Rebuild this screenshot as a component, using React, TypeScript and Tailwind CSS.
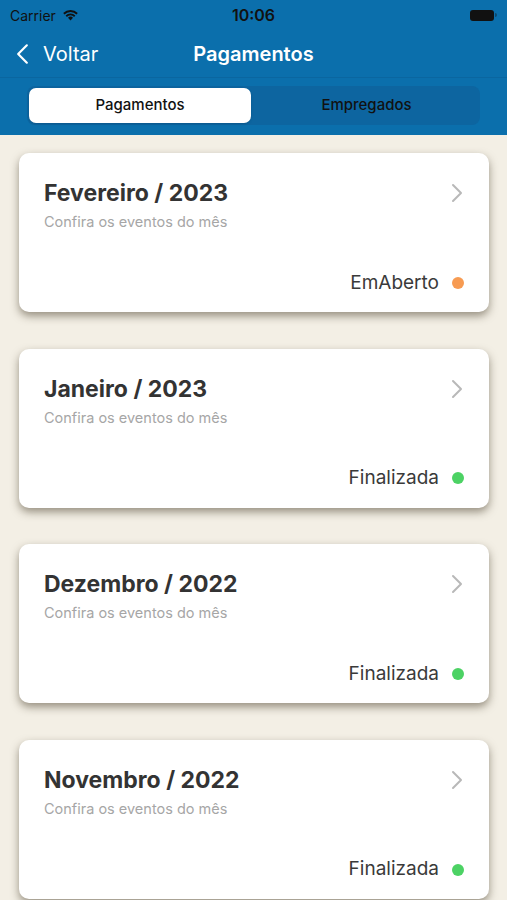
import React from "react";

const items = [
  { title: "Fevereiro / 2023", status: "EmAberto", dot: "bg-[#f79b52]" },
  { title: "Janeiro / 2023", status: "Finalizada", dot: "bg-[#4cd264]" },
  { title: "Dezembro / 2022", status: "Finalizada", dot: "bg-[#4cd264]" },
  { title: "Novembro / 2022", status: "Finalizada", dot: "bg-[#4cd264]" },
];

function Chevron({ className }: { className?: string }) {
  return (
    <svg width="12" height="20" viewBox="0 0 12 20" className={className} fill="none">
      <path d="M2 2l8 8-8 8" stroke="currentColor" strokeWidth="2" strokeLinecap="round" strokeLinejoin="round" />
    </svg>
  );
}

export default function App() {
  return (
    <div className="w-[507px] h-[900px] overflow-hidden bg-[#f3efe5] font-['Inter','Liberation_Sans',sans-serif]">
      <div className="bg-[#0b6fac]">
        <div className="h-[30px] flex items-center justify-between px-[10px] text-[#111]">
          <div className="flex items-center gap-[6px] w-[120px]">
            <span className="text-[14px]">Carrier</span>
            <svg width="17" height="12" viewBox="0 0 17 12">
              <path d="M8.5 11.5L6 8.8a3.6 3.6 0 0 1 5 0z" fill="#111" />
              <path d="M3.6 6.5a6.9 6.9 0 0 1 9.8 0l-1.3 1.4a5 5 0 0 0-7.2 0z" fill="#111" />
              <path d="M1.2 4a10.3 10.3 0 0 1 14.6 0l-1.3 1.4a8.4 8.4 0 0 0-12 0z" fill="#111" />
            </svg>
          </div>
          <span className="text-[16px] font-semibold">10:06</span>
          <div className="w-[120px] flex justify-end">
            <div className="flex items-center">
              <div className="w-[24px] h-[11px] rounded-[3px] bg-[#111]" />
              <div className="w-[2px] h-[4px] rounded-r bg-[#111]/40 ml-[1px]" />
            </div>
          </div>
        </div>
        <div className="h-[48px] flex items-center relative border-b border-[#0a66a0]">
          <div className="flex items-center gap-[14px] pl-[16px] text-white">
            <Chevron className="rotate-180 w-[13px] h-[22px]" />
            <span className="text-[20px]">Voltar</span>
          </div>
          <div className="absolute left-0 right-0 text-center text-white text-[20px] font-semibold pointer-events-none">
            Pagamentos
          </div>
        </div>
        <div className="h-[57px] flex items-center px-[27px] pb-[2px]">
          <div className="flex-1 h-[39px] bg-[#0d65a0] rounded-[8px] p-[2px] flex">
            <div className="w-[222px] bg-white rounded-[7px] flex items-center justify-center text-[15px] font-medium text-[#111] shadow-sm">
              Pagamentos
            </div>
            <div className="flex-1 flex items-center justify-center text-[15px] font-medium text-[#111] pl-[4px]">
              Empregados
            </div>
          </div>
        </div>
      </div>
      <div className="flex flex-col gap-[36.6px] pl-[19px] pr-[18px] pt-[18px]">
        {items.map((it) => (
          <div
            key={it.title}
            className="h-[159px] bg-white rounded-[10px] shadow-[0_4px_8px_rgba(60,50,30,0.5)] pl-[25px] pr-[25px] pt-[25px] pb-[15px] flex flex-col"
          >
            <div className="flex items-start justify-between">
              <div className="flex flex-col">
                <span className="text-[23px] leading-[30px] font-bold text-[#333]">{it.title}</span>
                <span className="text-[14.5px] leading-[18px] text-[#a6a6a6] mt-[5px]">Confira os eventos do mês</span>
              </div>
              <Chevron className="text-[#b8b8b8] mt-[5px] mr-[1px]" />
            </div>
            <div className="mt-auto flex items-center justify-end gap-[13px]">
              <span className="text-[19px] text-[#3a3a3a]">{it.status}</span>
              <span className={`w-[12px] h-[12px] rounded-full ${it.dot}`} />
            </div>
          </div>
        ))}
      </div>
    </div>
  );
}
